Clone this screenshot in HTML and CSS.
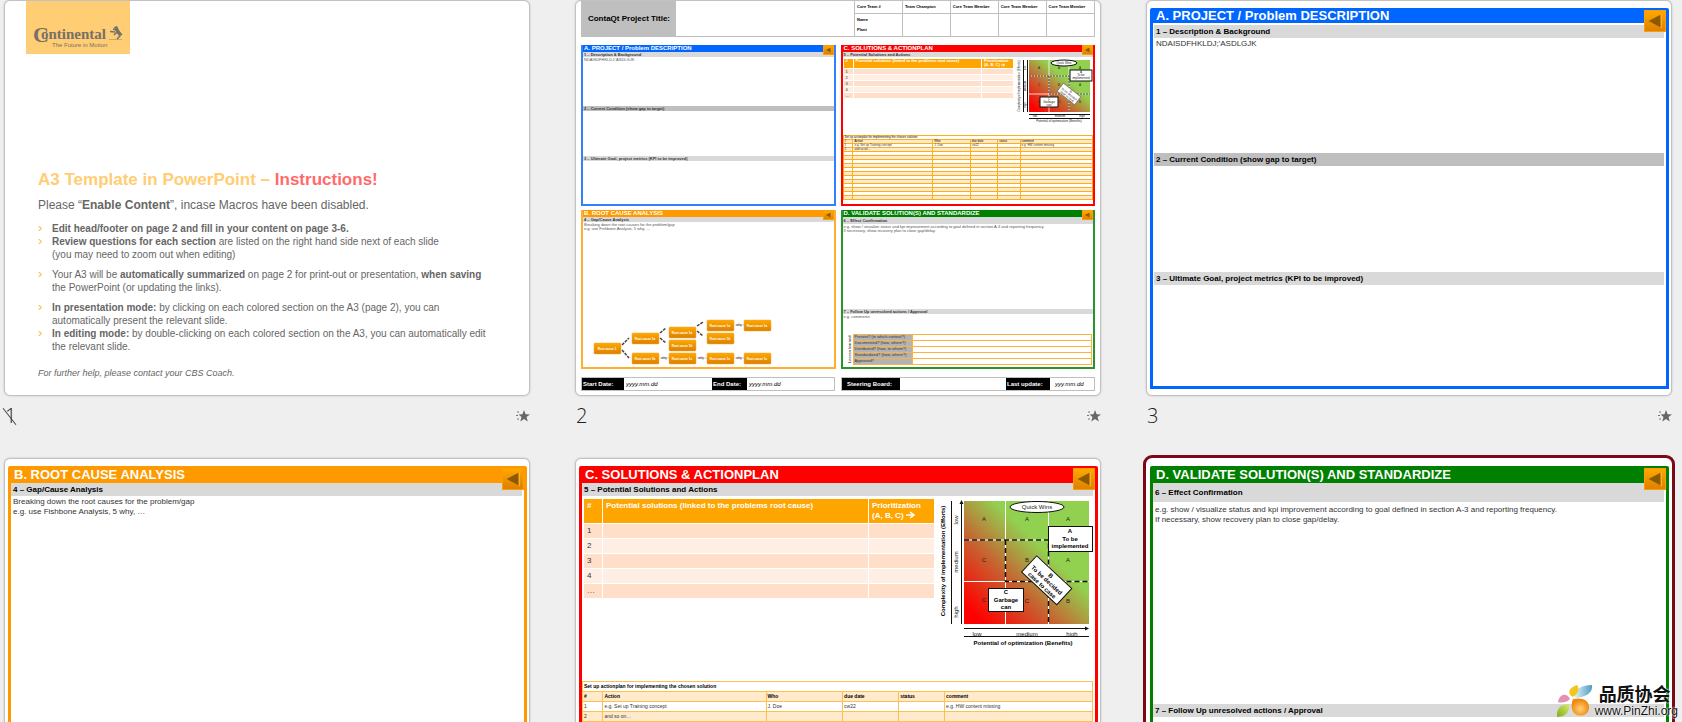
FILE: index.html
```html
<!DOCTYPE html>
<html lang="en">
<head>
<meta charset="utf-8">
<title>Slide sorter</title>
<link rel="stylesheet" href="styles.css">
</head>
<body>
<svg class="defs" aria-hidden="true">
  <defs>
    <linearGradient id="heat" x1="0" y1="1" x2="1" y2="0">
      <stop offset="0.08" stop-color="#ff0000"/>
      <stop offset="0.36" stop-color="#c86030"/>
      <stop offset="0.62" stop-color="#92d050"/>
    </linearGradient>
    <linearGradient id="amber" x1="0" y1="0" x2="0" y2="1">
      <stop offset="0" stop-color="#ffa800"/>
      <stop offset="1" stop-color="#dd8000"/>
    </linearGradient>
    <symbol id="star" viewBox="0 0 14 14">
      <path d="M8 1l1.600 4.300 4.400.1-3.500 2.700 1.300 4.400L8 10l-3.700 2.500 1.200-4.400L2.500 5.400l4-.1z" fill="#666"/>
      <path d="M1 3h2M0 6.500h2M1 10h2" stroke="#777"/>
    </symbol>
    <symbol id="back" viewBox="0 0 22 22">
      <path d="M4 11L17 4v14z" fill="#8b5a00"/>
      <path d="M18 3.500V19" stroke="#ffb833" fill="none"/>
    </symbol>
  </defs>
</svg>

<main class="sorter">

  <figure class="slide">
    <div class="card intro">
      <div class="brand">
        <svg class="brand-logo" viewBox="0 0 104 54" role="img" aria-label="Continental, The Future in Motion">
          <text class="brand-c" x="7" y="41">C</text>
          <text class="brand-name" x="15" y="38">ontinental</text>
          <path d="M83 38.500h13" stroke="#8f8268" stroke-width="0.500"/>
          <path d="M84 30.500l5 .5M90 26l1 3 3 3 0 3-3 3M91 31l-3 3M90 29l-3-1M94 32l2 2" stroke="#777069" stroke-width="1.500" fill="none"/>
          <path d="M88 26l3-1 2 4 2 3-2 3-3-4z" fill="#777069"/>
          <text class="brand-tag" x="26" y="46">The Future in Motion</text>
        </svg>
      </div>
      <h1 class="intro-title">A3 Template in PowerPoint – <span class="accent">Instructions!</span></h1>
      <p class="intro-sub">Please “<b>Enable Content</b>”, incase Macros have been disabled.</p>
      <ul class="tips">
        <li><b>Edit head/footer on page 2 and fill in your content on page 3-6.</b></li>
        <li class="tip-end"><b>Review questions for each section</b> are listed on the right hand side next of each slide<br>(you may need to zoom out when editing)</li>
        <li class="tip-end">Your A3 will be <b>automatically summarized</b> on page 2 for print-out or presentation, <b>when saving</b><br>the PowerPoint (or updating the links).</li>
        <li><b>In presentation mode:</b> by clicking on each colored section on the A3 (page 2), you can<br>automatically present the relevant slide.</li>
        <li><b>In editing mode:</b> by double-clicking on each colored section on the A3, you can automatically edit<br>the relevant slide.</li>
      </ul>
      <p class="intro-help">For further help, please contact your CBS Coach.</p>
    </div>
    <figcaption class="caption"><span class="num hidden-slide">1</span><svg class="star"><use href="#star"/></svg></figcaption>
  </figure>

  <figure class="slide">
    <div class="card summary">
      <header class="sum-head">
        <div class="sum-title">ContaQt Project Title:</div>
        <table class="team">
          <tr><th>Core Team #</th><th>Team Champion</th><th>Core Team Member</th><th>Core Team Member</th><th>Core Team Member</th></tr>
          <tr><td>Name<br>Plant</td><td></td><td></td><td></td><td></td></tr>
        </table>
      </header>
      <div class="board">
        <section class="panel mini blue">
          <h2 class="panel-title">A. PROJECT / Problem DESCRIPTION</h2>
          <button class="back" aria-label="Back"><svg><use href="#back"/></svg></button>
          <div class="parts three">
            <div class="part"><h3 class="bar">1 – Description &amp; Background</h3><p class="note">NDAISDFHKLDJ;'ASDLGJK</p></div>
            <div class="part"><h3 class="bar dark">2 – Current Condition (show gap to target)</h3></div>
            <div class="part"><h3 class="bar">3 – Ultimate Goal, project metrics (KPI to be improved)</h3></div>
          </div>
        </section>

        <section class="panel mini red">
          <h2 class="panel-title">C. SOLUTIONS &amp; ACTIONPLAN</h2>
          <button class="back" aria-label="Back"><svg><use href="#back"/></svg></button>
          <div class="parts plan">
            <div class="part">
              <h3 class="bar">5 – Potential Solutions and Actions</h3>
              <div class="split">
                <table class="ideas">
                  <tr><th class="c-no">#</th><th>Potential solutions (linked to the problems root cause)</th><th class="c-prio">Prioritization<br>(A, B, C) <svg class="arrow" viewBox="0 0 9 8"><path d="M0 4h8M4 1l4 3-4 3" stroke="#fff" stroke-width="2" fill="none"/></svg></th></tr>
                  <tr><td>1</td><td></td><td></td></tr>
                  <tr><td>2</td><td></td><td></td></tr>
                  <tr><td>3</td><td></td><td></td></tr>
                  <tr><td>4</td><td></td><td></td></tr>
                  <tr><td>…</td><td></td><td></td></tr>
                </table>
                <svg class="chart" viewBox="0 0 78 65">
                  <rect x="14" y="1" width="61" height="52" fill="url(#heat)"/>
                  <path d="M34 1v52M54 1v52M14 17h61M14 35h61" stroke="#fff" stroke-width="0.800"/>
                  <path d="M14 17h40v18h21M34 17v18h20v18" stroke="#222" stroke-width="0.800" stroke-dasharray="2 1" fill="none"/>
                  <path d="M8.500 1v52M12.500 1v52M14 55.500h61M14 59.500h61" stroke="#111"/>
                  <g class="chart-text tiny">
                    <text x="24" y="10">A</text><text x="44" y="10">A</text><text x="65" y="10">A</text>
                    <text x="24" y="27">C</text><text x="44" y="27">B</text><text x="65" y="27">A</text>
                    <text x="24" y="44">C</text><text x="45" y="44">C</text><text x="65" y="44">B</text>
                  </g>
                  <ellipse cx="49" cy="4" rx="13" ry="3" fill="#fff" stroke="#111"/>
                  <rect x="55" y="11" width="22" height="11" fill="#fff" stroke="#111"/>
                  <rect x="25" y="38" width="18" height="10" fill="#fff" stroke="#111"/>
                  <g transform="rotate(38 54 35)"><rect x="43" y="30" width="22" height="10" fill="#fff" stroke="#444" stroke-width="0.500"/>
                    <g class="chart-text tiny"><text x="54" y="33">B</text><text x="54" y="36">To be decided</text><text x="54" y="39">case to case</text></g></g>
                  <g class="chart-text tiny">
                    <text x="49" y="5">Quick Wins</text>
                    <text x="66" y="14">A</text><text x="66" y="17">To be</text><text x="66" y="20">implemented</text>
                    <text x="34" y="41">C</text><text x="34" y="44">Garbage</text><text x="34" y="47">can</text>
                    <text x="20" y="58">low</text><text x="45" y="58">medium</text><text x="67" y="58">high</text>
                    <text x="44" y="63">Potential of optimization (Benefits)</text>
                    <text transform="translate(5 27) rotate(-90)">Complexity of implementation (Efforts)</text>
                    <text transform="translate(11 9) rotate(-90)">low</text><text transform="translate(11 27) rotate(-90)">medium</text><text transform="translate(11 46) rotate(-90)">high</text>
                  </g>
                </svg>
              </div>
            </div>
            <table class="actions">
              <colgroup><col class="k1"><col class="k2"><col class="k3"><col class="k4"><col class="k5"><col class="k6"></colgroup>
              <tr><th colspan="6">Set up actionplan for implementing the chosen solution</th></tr>
              <tr><th>#</th><th>Action</th><th>Who</th><th>due date</th><th>status</th><th>comment</th></tr>
              <tr><td>1</td><td>e.g. Set up Training concept</td><td>J. Doe</td><td>cw22</td><td></td><td>e.g. HW content missing</td></tr>
              <tr><td>2</td><td>and so on…</td><td></td><td></td><td></td><td></td></tr>
              <tr><td></td><td></td><td></td><td></td><td></td><td></td></tr>
              <tr><td></td><td></td><td></td><td></td><td></td><td></td></tr>
              <tr><td></td><td></td><td></td><td></td><td></td><td></td></tr>
              <tr><td></td><td></td><td></td><td></td><td></td><td></td></tr>
              <tr><td></td><td></td><td></td><td></td><td></td><td></td></tr>
              <tr><td></td><td></td><td></td><td></td><td></td><td></td></tr>
              <tr><td></td><td></td><td></td><td></td><td></td><td></td></tr>
              <tr><td></td><td></td><td></td><td></td><td></td><td></td></tr>
              <tr><td></td><td></td><td></td><td></td><td></td><td></td></tr>
              <tr><td></td><td></td><td></td><td></td><td></td><td></td></tr>
              <tr><td></td><td></td><td></td><td></td><td></td><td></td></tr>
              <tr><td></td><td></td><td></td><td></td><td></td><td></td></tr>
            </table>
          </div>
        </section>

        <section class="panel mini orange">
          <h2 class="panel-title">B. ROOT CAUSE ANALYSIS</h2>
          <button class="back" aria-label="Back"><svg><use href="#back"/></svg></button>
          <div class="parts">
            <div class="part"><h3 class="bar">4 – Gap/Cause Analysis</h3><p class="note">Breaking down the root causes for the problem/gap<br>e.g. use Fishbone Analysis, 5 why, …</p></div>
          </div>
          <svg class="tree" viewBox="0 0 180 48">
            <path d="M29 26l7-7M29 31l7 8M67 14l6-5M67 19l6 5M104 7l6-4M104 12l6 5" stroke="#444" stroke-width="1.500" stroke-dasharray="3 1"/>
            <path d="M142 6h10M67 39h10M104 39h11M142 39h10" stroke="#999" stroke-width="0.500"/>
            <g fill="url(#amber)" stroke="#f6a63a" stroke-width="0.500">
              <rect x="1" y="24" width="27" height="11" rx="1"/>
              <rect x="39" y="14" width="27" height="11" rx="1"/><rect x="39" y="34" width="27" height="11" rx="1"/>
              <rect x="76" y="8" width="27" height="11" rx="1"/><rect x="76" y="21" width="27" height="11" rx="1"/><rect x="76" y="34" width="27" height="11" rx="1"/>
              <rect x="114" y="1" width="27" height="11" rx="1"/><rect x="114" y="14" width="27" height="11" rx="1"/><rect x="114" y="34" width="27" height="11" rx="1"/>
              <rect x="151" y="1" width="27" height="11" rx="1"/><rect x="151" y="34" width="27" height="11" rx="1"/>
            </g>
            <g class="tree-text">
              <text x="14" y="31">Root cause 1</text>
              <text x="52" y="21">Root cause 1a</text><text x="52" y="41">Root cause 1b</text>
              <text x="89" y="15">Root cause 1a</text><text x="89" y="28">Root cause 1b</text><text x="89" y="41">Root cause 1c</text>
              <text x="127" y="8">Root cause 1a</text><text x="127" y="21">Root cause 1b</text><text x="127" y="41">Root cause 1c</text>
              <text x="164" y="8">Root cause 1a</text><text x="164" y="41">Root cause 1c</text>
            </g>
            <g class="chart-text tiny"><text x="146" y="7">why</text><text x="71" y="40">why</text><text x="108" y="40">why</text><text x="146" y="40">why</text></g>
          </svg>
        </section>

        <section class="panel mini green">
          <h2 class="panel-title">D. VALIDATE SOLUTION(S) AND STANDARDIZE</h2>
          <button class="back" aria-label="Back"><svg><use href="#back"/></svg></button>
          <div class="parts check">
            <div class="part"><h3 class="bar tall">6 – Effect Confirmation</h3><p class="note spaced">e.g. show / visualize status and kpi improvement according to goal defined in section A-3 and reporting frequency.<br>If necessary, show recovery plan to close gap/delay.</p></div>
            <div class="part"><h3 class="bar">7 – Follow Up unresolved actions / Approval</h3><p class="note">e.g. comments</p></div>
          </div>
          <div class="lessons">
            <span class="lessons-side">Lesson learned</span>
            <table class="lessons-table">
              <tr><th>Present? (in which context?)</th><td></td></tr>
              <tr><th>Documented? (how, where?)</th><td></td></tr>
              <tr><th>Distributed? (how, to whom?)</th><td></td></tr>
              <tr><th>Standardized? (how, where?)</th><td></td></tr>
              <tr><th>Approved?</th><td></td></tr>
            </table>
          </div>
        </section>
      </div>
      <footer class="sum-foot">
        <dl class="strip"><dt class="w-start">Start Date:</dt><dd>yyyy.mm.dd</dd><dt class="w-end">End Date:</dt><dd class="w-fix">yyyy.mm.dd</dd></dl>
        <dl class="strip"><dt class="w-board">Steering Board:</dt><dd></dd><dt class="w-last">Last update:</dt><dd class="w-date">yyy.mm.dd</dd></dl>
      </footer>
    </div>
    <figcaption class="caption"><span class="num">2</span><svg class="star"><use href="#star"/></svg></figcaption>
  </figure>

  <figure class="slide">
    <div class="card framed">
      <section class="panel blue low">
        <h2 class="panel-title">A. PROJECT / Problem DESCRIPTION</h2>
        <button class="back" aria-label="Back"><svg><use href="#back"/></svg></button>
        <div class="parts three inset">
          <div class="part"><h3 class="bar">1 – Description &amp; Background</h3><p class="note">NDAISDFHKLDJ;'ASDLGJK</p></div>
          <div class="part"><h3 class="bar dark">2 – Current Condition (show gap to target)</h3></div>
          <div class="part"><h3 class="bar">3 – Ultimate Goal, project metrics (KPI to be improved)</h3></div>
        </div>
      </section>
    </div>
    <figcaption class="caption"><span class="num">3</span><svg class="star"><use href="#star"/></svg></figcaption>
  </figure>

  <figure class="slide">
    <div class="card framed">
      <section class="panel orange">
        <h2 class="panel-title">B. ROOT CAUSE ANALYSIS</h2>
        <button class="back" aria-label="Back"><svg><use href="#back"/></svg></button>
        <div class="parts">
          <div class="part"><h3 class="bar">4 – Gap/Cause Analysis</h3><p class="note">Breaking down the root causes for the problem/gap<br>e.g. use Fishbone Analysis, 5 why, …</p></div>
        </div>
      </section>
    </div>
  </figure>

  <figure class="slide">
    <div class="card framed">
      <section class="panel red">
        <h2 class="panel-title">C. SOLUTIONS &amp; ACTIONPLAN</h2>
        <button class="back" aria-label="Back"><svg><use href="#back"/></svg></button>
        <div class="parts plan">
          <div class="part">
            <h3 class="bar">5 – Potential Solutions and Actions</h3>
            <div class="split">
              <table class="ideas">
                <tr><th class="c-no">#</th><th>Potential solutions (linked to the problems root cause)</th><th class="c-prio">Prioritization<br>(A, B, C) <svg class="arrow" viewBox="0 0 9 8"><path d="M0 4h8M4 1l4 3-4 3" stroke="#fff" stroke-width="1.500" fill="none"/></svg></th></tr>
                <tr><td>1</td><td></td><td></td></tr>
                <tr><td>2</td><td></td><td></td></tr>
                <tr><td>3</td><td></td><td></td></tr>
                <tr><td>4</td><td></td><td></td></tr>
                <tr><td>…</td><td></td><td></td></tr>
              </table>
              <svg class="chart" viewBox="0 0 156 148">
                <rect x="25" y="2" width="125" height="123" fill="url(#heat)"/>
                <path d="M66.500 2v123M109.500 2v123M25 41h125M25 82.500h125" stroke="#fff"/>
                <path d="M25 41h84.500v41.500H150M66.500 41v41.500h43V125" stroke="#111" stroke-width="1.500" stroke-dasharray="5 3" fill="none"/>
                <path d="M12.500 2v123M22.500 3v122M25 129.500h122M25 137.500h125" stroke="#111"/>
                <path d="M20.500 5l2-4 2 4zM146 127.500l4 2-4 2z" fill="#111"/>
                <g class="chart-text">
                  <text x="45" y="22">A</text><text x="88" y="22">A</text><text x="129" y="22">A</text>
                  <text x="45" y="63">C</text><text x="88" y="63">B</text><text x="129" y="63">A</text>
                  <text x="45" y="103">C</text><text x="88" y="104">C</text><text x="129" y="104">B</text>
                </g>
                <ellipse cx="98" cy="8" rx="27" ry="5.500" fill="#fff" stroke="#111"/>
                <rect x="109.500" y="27.500" width="44" height="25" fill="#fff" stroke="#111"/>
                <rect x="49.500" y="89.500" width="35" height="23" fill="#fff" stroke="#111"/>
                <g transform="rotate(43 107 82)"><rect x="83" y="70" width="48" height="22" fill="#fff" stroke="#111"/>
                  <g class="chart-text strong"><text x="107" y="77">B</text><text x="107" y="83">To be decided</text><text x="107" y="90">case to case</text></g></g>
                <g class="chart-text">
                  <text x="98" y="10">Quick Wins</text>
                  <text x="38" y="137">low</text><text x="88" y="137">medium</text><text x="133" y="137">high</text>
                  <text transform="translate(19 21) rotate(-90)">low</text><text transform="translate(19 63) rotate(-90)">medium</text><text transform="translate(19 113) rotate(-90)">high</text>
                </g>
                <g class="chart-text strong">
                  <text x="131" y="34">A</text><text x="131" y="42">To be</text><text x="131" y="49">implemented</text>
                  <text x="67" y="95">C</text><text x="67" y="103">Garbage</text><text x="67" y="110">can</text>
                  <text x="84" y="146">Potential of optimization (Benefits)</text>
                  <text transform="translate(6 62) rotate(-90)">Complexity of implementation (Efforts)</text>
                </g>
              </svg>
            </div>
          </div>
          <table class="actions">
            <colgroup><col class="k1"><col class="k2"><col class="k3"><col class="k4"><col class="k5"><col class="k6"></colgroup>
            <tr><th colspan="6">Set up actionplan for implementing the chosen solution</th></tr>
            <tr><th>#</th><th>Action</th><th>Who</th><th>due date</th><th>status</th><th>comment</th></tr>
            <tr><td>1</td><td>e.g. Set up Training concept</td><td>J. Doe</td><td>cw22</td><td></td><td>e.g. HW content missing</td></tr>
            <tr><td>2</td><td>and so on…</td><td></td><td></td><td></td><td></td></tr>
            <tr><td></td><td></td><td></td><td></td><td></td><td></td></tr>
          </table>
        </div>
      </section>
    </div>
  </figure>

  <figure class="slide">
    <div class="card framed selected">
      <section class="panel green">
        <h2 class="panel-title">D. VALIDATE SOLUTION(S) AND STANDARDIZE</h2>
        <button class="back" aria-label="Back"><svg><use href="#back"/></svg></button>
        <div class="parts check">
          <div class="part"><h3 class="bar tall">6 – Effect Confirmation</h3><p class="note spaced">e.g. show / visualize status and kpi improvement according to goal defined in section A-3 and reporting frequency.<br>If necessary, show recovery plan to close gap/delay.</p></div>
          <div class="part"><h3 class="bar">7 – Follow Up unresolved actions / Approval</h3><p class="note spaced">e.g. comments</p></div>
        </div>
      </section>
    </div>
  </figure>
</main>

<aside class="watermark">
  <svg class="flower" viewBox="0 0 36 34">
    <defs>
      <radialGradient id="pO" cx=".5" cy=".6"><stop offset="0" stop-color="#ffd27a"/><stop offset="1" stop-color="#f08a10"/></radialGradient>
      <linearGradient id="pB"><stop offset="0" stop-color="#dff1f8"/><stop offset="1" stop-color="#4f9cc0"/></linearGradient>
      <linearGradient id="pG" x1="1" y1="0" x2="0" y2="1"><stop offset="0" stop-color="#d9ea6a"/><stop offset="1" stop-color="#7fae1c"/></linearGradient>
    </defs>
    <path d="M18 14C17 6 23 1 35 1 36 9 29 13 18 14z" fill="url(#pB)"/>
    <path d="M16 13C10 10 11 4 20 1c3 4 1 9-4 12z" fill="#f2c61c"/>
    <path d="M13 15C9 19 4 19 1 18c1-8 9-10 12-3z" fill="#e58fb4"/>
    <path d="M12 20c1 8-3 13-12 13C-1 26 3 20 12 20z" fill="url(#pG)"/>
    <path d="M16 15c9-2 16 1 16 8s-6 10-12 8c-5-2-7-9-4-16z" fill="url(#pO)"/>
  </svg>
  <div class="mark-text"><span class="mark-cn" lang="zh">品质协会</span><span class="mark-url">www.PinZhi.org</span></div>
</aside>
</body>
</html>
```
FILE: styles.css
```css
* { box-sizing: border-box; }

body {
  margin: 0;
  height: 100vh;
  overflow: hidden;
  position: relative;
  background: #efefef;
  color: #000;
  font-family: "Liberation Sans", Arial, sans-serif;
}

h1, h2, h3, p, ul, dl, dd, figure { margin: 0; padding: 0; }
table { border-spacing: 0; }
.defs { position: absolute; width: 0; height: 0; }

/* Sorter grid */
.sorter {
  display: grid;
  grid-template-columns: repeat(3, minmax(0, 1fr));
  column-gap: 45px;
  padding: 0 10px 0 4px;
}
.card {
  position: relative;
  aspect-ratio: 93 / 70;
  background: #fff;
  border: 1px solid #c2c2c2;
  border-radius: 6px;
  box-shadow: 0 0 2px #bbb;
  overflow: hidden;
}
.framed { padding: 7px 2px 6px 3px; }
.selected {
  border-color: #fff;
  outline: 3px solid #7b0a16;
  outline-offset: 0;
}
.caption {
  display: flex;
  justify-content: space-between;
  align-items: center;
  height: 62px;
  padding: 0 0 22px 1px;
}
.num {
  position: relative;
  font: 300 20px/24px "Open Sans", sans-serif;
  color: #222;
}
.hidden-slide::after {
  content: "";
  position: absolute;
  left: 4px;
  top: 2px;
  height: 21px;
  border-left: 1px solid #444;
  transform: rotate(-38deg);
}
.star { width: 14px; height: 14px; }

/* Intro slide */
.intro { padding: 0 20px 0 33px; color: #666; }
.brand {
  width: 104px;
  height: 53px;
  margin-left: -12px;
  background: #ffcd73;
}
.brand-logo { display: block; width: 104px; height: 54px; }
.brand-c { font: bold 22px "Liberation Serif", serif; fill: #777069; }
.brand-name { font: bold 15px "Liberation Serif", serif; fill: #777069; }
.brand-tag { font: 6px "Liberation Sans", sans-serif; fill: #777069; }
.intro-title {
  margin-top: 116px;
  font-size: 17px;
  line-height: 20px;
  color: #ffcd73;
}
.accent { color: #ff6b6b; }
.intro-sub { margin-top: 7px; font-size: 12px; line-height: 16px; }
.tips { margin-top: 9px; list-style: none; font-size: 10px; line-height: 13px; }
.tips li { position: relative; padding-left: 14px; white-space: nowrap; }
.tips li::before { content: "›"; position: absolute; left: 0; font-size: 13px; line-height: 12px; color: #ffb84d; }
.tip-end { margin-bottom: 7px; }
.intro-help { margin-top: 14px; font-size: 9px; line-height: 12px; font-style: italic; }

/* Coloured panels */
.panel {
  --tone: #0066ff;
  --edge: var(--tone);
  position: relative;
  display: flex;
  flex-direction: column;
  min-width: 0;
  min-height: 0;
  height: 100%;
  border: 3px solid var(--edge);
  border-top: 0;
  border-radius: 2px 2px 0 0;
  background: #fff;
}
.red { --tone: #ff0000; }
.orange { --tone: #ff9900; }
.green { --tone: #008000; }
.panel-title {
  flex: none;
  padding-left: 3px;
  background: var(--tone);
  color: #fff;
  font-size: 13px;
  line-height: 17px;
  white-space: nowrap;
}
.low .panel-title { line-height: 15px; }
.back {
  position: absolute;
  top: 2px;
  right: 0;
  width: 22px;
  height: 22px;
  padding: 0;
  border: 1px solid #ff9c00;
  background: linear-gradient(#ffa800, #dd8000);
}
.back svg { display: block; width: 100%; height: 100%; }
.parts { flex: 1; min-height: 0; display: grid; padding-right: 2px; }
.inset { padding: 2px 2px 0 1px; }
.three { grid-template-rows: 128fr 119fr 114fr; }
.plan { grid-template-rows: 198fr 163fr; }
.check { grid-template-rows: 221fr 140fr; }
.part { min-width: 0; min-height: 0; }
.bar {
  padding-left: 2px;
  background: #d9d9d9;
  font-size: 8px;
  line-height: 13px;
  white-space: nowrap;
}
.dark { background: #bfbfbf; }
.tall { line-height: 19px; }
.note {
  padding: 1px 2px;
  font-size: 8px;
  line-height: 10px;
  color: #333;
  white-space: nowrap;
}
.spaced { padding-top: 3px; }

/* Potential solutions */
.split { display: flex; align-items: flex-start; gap: 5px; margin-right: -2px; padding: 3px 0 0 2px; }
.ideas { flex: 1; font-size: 8px; line-height: 10px; color: #333; table-layout: fixed; width: 100%; }
.ideas th {
  height: 24px;
  padding: 2px 3px;
  background: #ffa500;
  color: #fff;
  text-align: left;
  vertical-align: top;
  border-bottom: 1px solid #fff;
}
.ideas th + th, .ideas td + td { border-left: 1px solid #fff; }
.ideas td { height: 15px; padding: 0 3px; background: #ffeee4; border-bottom: 1px solid #fff; }
.ideas tr:nth-child(even) td { background: #ffdfca; }
.c-no { width: 18px; }
.c-prio { width: 66px; }
.arrow { width: 9px; height: 8px; vertical-align: -1px; }
.chart { flex: none; width: 156px; height: 148px; }
.chart-text { font-size: 6px; text-anchor: middle; fill: #222; }
.strong { font-weight: bold; fill: #000; }
.tiny { font-size: 3px; }

/* Action plan */
.actions {
  width: 100%;
  align-self: start;
  table-layout: fixed;
  border-collapse: collapse;
  font-size: 5px;
  line-height: 8px;
  color: #333;
}
.actions th, .actions td {
  height: 10px;
  padding: 0 1px;
  border: 1px solid #ffc04d;
  text-align: left;
  white-space: nowrap;
}
.actions th { color: #000; }
.actions tr:nth-child(even) { background: #ffebcc; }
.k1 { width: 4%; }
.k2 { width: 32%; }
.k3 { width: 15%; }
.k4 { width: 11%; }
.k5 { width: 9%; }

/* Summary slide */
.summary { display: flex; flex-direction: column; gap: 8px; padding: 0 5px 4px; }
.sum-head { display: flex; height: 36px; border: 1px solid #bfbfbf; border-top: 0; }
.sum-title {
  width: 94px;
  background: #bfbfbf;
  font-size: 8px;
  font-weight: bold;
  line-height: 35px;
  text-align: center;
}
.team {
  width: 240px;
  margin-left: auto;
  table-layout: fixed;
  border-collapse: collapse;
  font-size: 4px;
  font-weight: bold;
  line-height: 10px;
}
.team th, .team td { padding: 0 2px; border-left: 1px solid #bfbfbf; text-align: left; white-space: nowrap; }
.team th { height: 12px; border-bottom: 1px solid #bfbfbf; }
.board {
  flex: 1;
  min-height: 0;
  display: grid;
  grid-template-columns: repeat(2, minmax(0, 1fr));
  grid-template-rows: 161fr 159fr;
  gap: 4px 5px;
}
.mini { border-width: 0 2px 2px; border-radius: 0; }
.mini.blue { --edge: #3380ff; }
.mini.orange { --edge: #ffad33; }
.mini.green { --edge: #2a932a; }
.mini .panel-title { padding-left: 1px; font-size: 6px; line-height: 7px; }
.mini .back { top: 0; width: 11px; height: 10px; }
.mini .parts { padding: 0; }
.mini .bar { padding-left: 1px; font-size: 4px; line-height: 5px; color: #333; }
.mini .tall { line-height: 7px; }
.mini .note { padding: 1px; font-size: 4px; line-height: 4px; color: #555; }
.mini .split { gap: 2px; margin-right: 0; padding: 2px 0 0 1px; }
.mini .ideas { font-size: 4px; line-height: 4px; }
.mini .ideas th { height: 10px; padding: 0 2px; }
.mini .ideas td { height: 6px; padding: 0 2px; }
.mini .c-no { width: 9px; }
.mini .c-prio { width: 32px; }
.mini .arrow { width: 4px; height: 4px; }
.mini .chart { width: 78px; height: 65px; }
.mini .actions { font-size: 3px; line-height: 3px; }
.mini .actions th, .mini .actions td { height: 4px; border-color: #ffad1a; font-weight: normal; }
.tree { position: absolute; left: 10px; bottom: 0; width: 180px; height: 48px; }
.tree-text { font-size: 3px; font-weight: bold; text-anchor: middle; fill: #fff; }
.lessons { position: absolute; left: 4px; right: 1px; bottom: 2px; display: flex; align-items: stretch; }
.lessons-side { writing-mode: vertical-rl; transform: rotate(180deg); font-size: 4px; line-height: 6px; text-align: center; }
.lessons-table { flex: 1; border-collapse: collapse; font-size: 4px; line-height: 4px; color: #333; }
.lessons-table th, .lessons-table td { height: 6px; padding: 0 1px; border: 1px solid #ffb13d; }
.lessons-table th { width: 59px; background: #b3b3b3; font-weight: normal; text-align: left; white-space: nowrap; }
.sum-foot { display: grid; grid-template-columns: repeat(2, minmax(0, 1fr)); gap: 6px; height: 14px; }
.strip { display: flex; border: 1px solid #bfbfbf; font-size: 6px; line-height: 12px; white-space: nowrap; }
.strip dt { background: #000; color: #fff; font-weight: bold; padding-left: 1px; }
.strip dd { flex: 1; padding-left: 2px; font-style: italic; }
.w-start { width: 42px; }
.w-end { width: 35px; }
.strip .w-fix { flex: none; width: 87px; }
.strip .w-board { width: 58px; padding-left: 5px; }
.w-last { width: 44px; }
.strip .w-date { flex: none; width: 44px; padding-left: 5px; }

/* Watermark */
.watermark { position: absolute; right: 4px; bottom: 3px; display: flex; align-items: center; gap: 2px; }
.flower { width: 36px; height: 34px; }
.mark-text { display: flex; flex-direction: column; color: #111; text-shadow: 0 0 2px #fff, 0 0 2px #fff; }
.mark-cn { padding-left: 4px; font: bold 18px/20px "Noto Sans CJK SC", sans-serif; }
.mark-url { font-size: 12px; line-height: 16px; }
```
